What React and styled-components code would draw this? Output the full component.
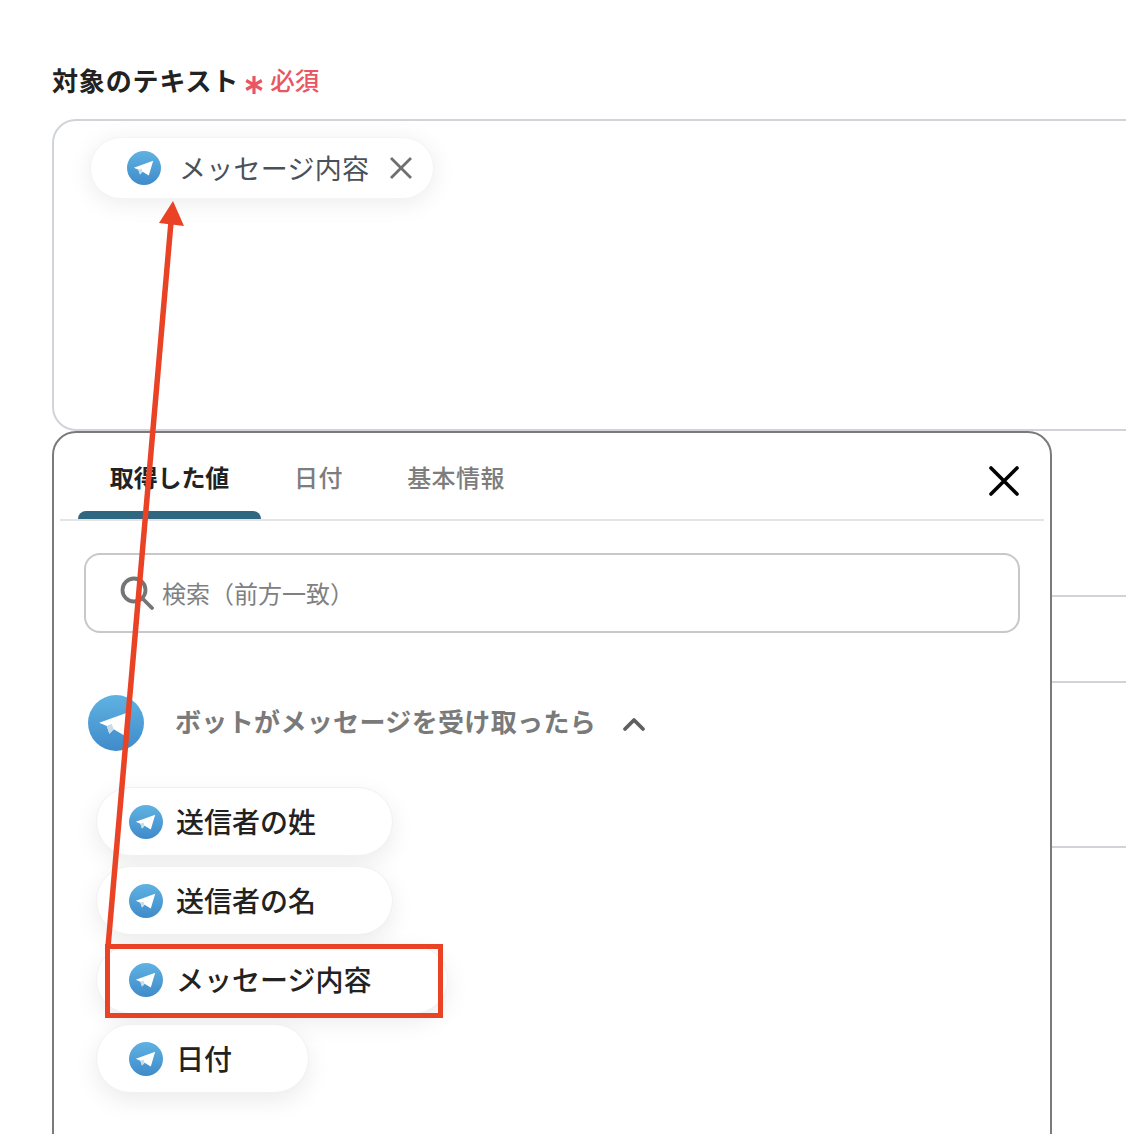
import React, { useId } from "react";
import styled, { createGlobalStyle } from "styled-components";

const GlobalStyle = createGlobalStyle`
  html, body {
    margin: 0;
    padding: 0;
    background: #fff;
    font-family: "Noto Sans CJK JP", "Noto Sans", sans-serif;
  }
`;

const Page = styled.div`
  position: relative;
  width: 1126px;
  height: 1134px;
  overflow: hidden;
  padding: 59px 0 0 52px;
  box-sizing: border-box;
  background: #fff;
`;

const Label = styled.div`
  display: flex;
  align-items: center;
  height: 40px;
  margin-bottom: 20px;
  color: #222;
  font-size: 26px;
  font-weight: 700;
  letter-spacing: 0.85px;
`;

const Asterisk = styled.svg`
  width: 18px;
  height: 18px;
  margin: 11px 7px 0 6px;
`;

const Required = styled.span`
  color: #ea5562;
  font-size: 24.5px;
  font-weight: 500;
  letter-spacing: 0;
`;

const Field = styled.div`
  position: relative;
  width: 1200px;
`;

const TextBox = styled.div`
  height: 312px;
  box-sizing: border-box;
  border: 2px solid #d0d4d9;
  border-radius: 24px;
  padding: 16px 0 0 36px;
`;

const Chip = styled.div`
  display: inline-flex;
  align-items: center;
  height: 62px;
  box-sizing: border-box;
  padding: 0 20px 0 36px;
  background: #fff;
  border: 1px solid #f4f4f4;
  border-radius: 31px;
  box-shadow: 0 4px 24px rgba(0, 0, 0, 0.08);
  color: #4b5159;
  font-size: 27px;
  letter-spacing: 0.25px;
`;

const ChipText = styled.span`
  margin: 0 20px 2px 18px;
`;

const BackRow = styled.div`
  height: ${(p) => p.$height}px;
  box-sizing: border-box;
  border-bottom: 2px solid #d0d4d9;
`;

const Panel = styled.div`
  position: absolute;
  top: 312px;
  left: 0;
  width: 1000px;
  height: 760px;
  box-sizing: border-box;
  background: #fff;
  border: 2px solid #7a7a7a;
  border-radius: 24px;
  padding: 0 6px;
`;

const TabBar = styled.div`
  display: flex;
  height: 88px;
  box-sizing: border-box;
  padding-left: 18px;
  border-bottom: 2px solid #e4e4e4;
`;

const Tab = styled.div`
  position: relative;
  display: flex;
  justify-content: center;
  padding-top: 26px;
  box-sizing: border-box;
  width: ${(p) => p.$width}px;
  margin-right: ${(p) => p.$gap}px;
  color: ${(p) => (p.$active ? "#222" : "#7d7d7d")};
  font-size: 24px;
  font-weight: ${(p) => (p.$active ? 700 : 500)};
  line-height: 36px;
  letter-spacing: ${(p) => (p.$active ? "-0.1px" : "0.4px")};
  white-space: nowrap;

  ${(p) =>
    p.$active &&
    `&::after {
      content: "";
      position: absolute;
      left: 0;
      right: 0;
      bottom: 0;
      height: 8px;
      background: #2f6680;
      border-radius: 8px 8px 0 0;
    }`}
`;

const CloseButton = styled.svg`
  position: absolute;
  top: 32px;
  right: 30px;
  width: 32px;
  height: 32px;
`;

const Search = styled.div`
  display: flex;
  align-items: center;
  height: 80px;
  box-sizing: border-box;
  margin: 32px 24px 0;
  padding-left: 34px;
  border: 2px solid #c8c8c8;
  border-radius: 16px;
  color: #808080;
  font-size: 24px;
`;

const SearchIcon = styled.svg`
  width: 34px;
  height: 34px;
  margin-right: 8px;
  flex-shrink: 0;
`;

const Placeholder = styled.span`
  margin-bottom: 2px;
`;

const Section = styled.div`
  display: flex;
  align-items: center;
  margin: 62px 0 36px 28px;
  color: #7a7a7a;
  font-size: 26px;
  font-weight: 700;
  letter-spacing: 0.35px;
`;

const SectionText = styled.span`
  margin: 0 26px 5px 31px;
`;

const Chevron = styled.svg`
  width: 24px;
  height: 16px;
  margin-top: 2px;
`;

const ItemList = styled.div`
  display: flex;
  flex-direction: column;
  align-items: flex-start;
  gap: 10px;
  margin-left: 36px;
`;

const Item = styled.div`
  position: relative;
  display: inline-flex;
  align-items: center;
  gap: 13px;
  height: 69px;
  box-sizing: border-box;
  padding: 0 76px 0 32px;
  background: #fff;
  border: 1px solid #f1f1f1;
  border-radius: 35px;
  box-shadow: 0 8px 24px rgba(0, 0, 0, 0.08);
  color: #222;
  font-size: 28px;
  font-weight: 500;
`;

const ItemText = styled.span`
  margin-bottom: 2px;
`;

const Highlight = styled.div`
  position: absolute;
  top: -2px;
  left: 8px;
  width: 338px;
  height: 74px;
  box-sizing: border-box;
  border: 5px solid #ea4225;
`;

const ArrowOverlay = styled.svg`
  position: absolute;
  top: 0;
  left: 0;
  width: 1126px;
  height: 1134px;
  pointer-events: none;
`;

const TelegramIcon = ({ size }) => {
  const id = useId();
  return (
    <svg width={size} height={size} viewBox="0 0 34 34" style={{ flexShrink: 0 }}>
      <defs>
        <linearGradient id={id} x1="0" y1="0" x2="0" y2="1">
          <stop offset="0" stopColor="#5fb2e2" />
          <stop offset="1" stopColor="#3f8bca" />
        </linearGradient>
      </defs>
      <circle cx="17" cy="17" r="17" fill={`url(#${id})`} />
      <path d="M6.8 16.8 26.2 9.8 21.8 24.4 15.6 20.8 13 23.6 11.4 18.8Z" fill="#fff" />
      <path d="M11.4 18.8 13 23.6 15.6 20.8 14.4 17.4Z" fill="#c9dcea" />
    </svg>
  );
};

const items = ["送信者の姓", "送信者の名", "メッセージ内容", "日付"];

export default function App() {
  return (
    <Page>
      <GlobalStyle />
      <Label>
        対象のテキスト
        <Asterisk viewBox="0 0 18 18">
          <path
            d="M9 0v18M1.2 4.5l15.6 9M16.8 4.5l-15.6 9"
            stroke="#ea5562"
            strokeWidth="3.2"
            fill="none"
          />
        </Asterisk>
        <Required>必須</Required>
      </Label>
      <Field>
        <TextBox>
          <Chip>
            <TelegramIcon size={34} />
            <ChipText>メッセージ内容</ChipText>
            <svg width="24" height="24" viewBox="0 0 24 24">
              <path d="M2 2 22 22M22 2 2 22" stroke="#6f6f6f" strokeWidth="2.8" fill="none" />
            </svg>
          </Chip>
        </TextBox>
        <BackRow $height={166} />
        <BackRow $height={86} />
        <BackRow $height={165} />
        <Panel>
          <TabBar>
            <Tab $active $width={183} $gap={33}>取得した値</Tab>
            <Tab $width={49} $gap={64}>日付</Tab>
            <Tab $width={98} $gap={0}>基本情報</Tab>
          </TabBar>
          <CloseButton viewBox="0 0 32 32">
            <path
              d="M3 3 29 29M29 3 3 29"
              stroke="#000"
              strokeWidth="3.6"
              strokeLinecap="round"
              fill="none"
            />
          </CloseButton>
          <Search>
            <SearchIcon viewBox="0 0 34 34">
              <circle cx="14" cy="14" r="11.5" stroke="#757575" strokeWidth="3.8" fill="none" />
              <path d="M22.5 22.5 32 32" stroke="#757575" strokeWidth="3.8" strokeLinecap="round" />
            </SearchIcon>
            <Placeholder>検索（前方一致）</Placeholder>
          </Search>
          <Section>
            <TelegramIcon size={56} />
            <SectionText>ボットがメッセージを受け取ったら</SectionText>
            <Chevron viewBox="0 0 24 16">
              <path
                d="M3 13 12 4 21 13"
                stroke="#5f5f5f"
                strokeWidth="3.8"
                strokeLinecap="round"
                strokeLinejoin="round"
                fill="none"
              />
            </Chevron>
          </Section>
          <ItemList>
            {items.map((label) => (
              <Item key={label}>
                <TelegramIcon size={34} />
                <ItemText>{label}</ItemText>
                {label === "メッセージ内容" && <Highlight />}
              </Item>
            ))}
          </ItemList>
        </Panel>
      </Field>
      <ArrowOverlay viewBox="0 0 1126 1134">
        <path d="M108 947 171 222" stroke="#ea4225" strokeWidth="5.5" fill="none" />
        <path d="M173 201 184 226 159 223Z" fill="#ea4225" />
      </ArrowOverlay>
    </Page>
  );
}
